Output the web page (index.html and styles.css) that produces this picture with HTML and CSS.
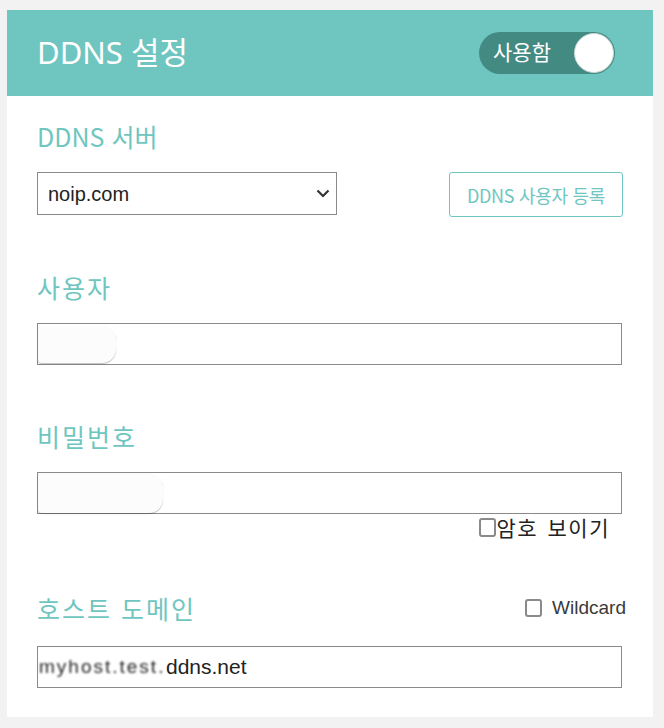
FILE: index.html
```html
<!DOCTYPE html>
<html lang="ko">
<head>
<meta charset="utf-8">
<title>DDNS 설정</title>
<link rel="stylesheet" href="styles.css">
</head>
<body>
<div class="card">
  <div class="header">
    <h1 class="title">DDNS 설정</h1>
    <div class="toggle">
      <span class="toggle-text">사용함</span>
      <span class="knob"></span>
    </div>
  </div>
  <div class="body">
    <div class="group first">
      <div class="label">DDNS 서버</div>
      <div class="row">
        <div class="select-wrap">
          <select class="select"><option>noip.com</option></select>
          <svg class="chevron" width="14" height="9" viewBox="0 0 14 9"><path d="M1.5 1.5 L7 7 L12.5 1.5" fill="none" stroke="#333" stroke-width="2.2"/></svg>
        </div>
        <button class="btn">DDNS 사용자 등록</button>
      </div>
    </div>
    <div class="group g2">
      <div class="label ko">사용자</div>
      <div class="field">
        <input class="input" type="text" value="">
        <span class="smudge s1"></span>
      </div>
    </div>
    <div class="group g3">
      <div class="label ko">비밀번호</div>
      <div class="field">
        <input class="input" type="password" value="">
        <span class="smudge s2"></span>
      </div>
      <label class="show-pw"><input type="checkbox" class="cb">암호 보이기</label>
    </div>
    <div class="group last">
      <div class="label-row">
        <div class="label ko">호스트 도메인</div>
        <label class="wildcard"><input type="checkbox" class="cb">Wildcard</label>
      </div>
      <div class="input host"><span class="blur">myhost.test.</span>ddns.net</div>
    </div>
  </div>
</div>
</body>
</html>
```
FILE: styles.css
```css
* { box-sizing: border-box; }
html, body { margin: 0; padding: 0; }
body {
  background: #f2f2f2;
  font-family: "Liberation Sans", "Noto Sans CJK KR", sans-serif;
  padding: 10px 11px 11px 7px;
}
.card {
  background: #fff;
  width: 646px;
}
.header {
  background: #6fc5bf;
  height: 86px;
  display: flex;
  align-items: center;
  justify-content: space-between;
  padding: 0 38px 0 30px;
}
.title {
  margin: 0;
  color: #fff;
  font-family: "Noto Sans", "Noto Sans CJK KR", sans-serif;
  font-weight: normal;
  font-size: 31px;
  line-height: 1;
  margin-top: -2px;
}
.toggle {
  width: 136px;
  height: 42px;
  border-radius: 21px;
  background: #438a83;
  display: flex;
  align-items: center;
  justify-content: space-between;
  padding: 0 1px 0 14px;
  margin-top: -1px;
}
.toggle-text {
  color: #fff;
  font-family: "Noto Sans CJK KR", sans-serif;
  font-size: 21px;
  line-height: 1;
  margin-top: -2px;
}
.knob {
  width: 40px;
  height: 40px;
  border-radius: 50%;
  background: #fff;
  border: 1px solid #c9d6d4;
}
.body {
  padding: 28px 31px 29px 30px;
}
.group.first { margin-top: 0; }
.g2 { margin-top: 58px; }
.g3 { margin-top: 59px; }
.last { margin-top: 57px; }
.label {
  color: #6fc6c0;
  font-family: "Noto Sans CJK KR", sans-serif;
  font-size: 25px;
  line-height: 25px;
  height: 30px;
  margin-bottom: 18px;
}
.label.ko { letter-spacing: 2px; }
.row {
  display: flex;
  justify-content: space-between;
  align-items: flex-start;
}
.select-wrap { position: relative; width: 300px; height: 43px; }
.select {
  -webkit-appearance: none;
  appearance: none;
  width: 300px;
  height: 43px;
  border: 1px solid #8a8a8a;
  border-radius: 0;
  background: #fff;
  font-family: "Liberation Sans", sans-serif;
  font-size: 20px;
  color: #222;
  padding: 0 10px;
  margin: 0;
}
.chevron {
  position: absolute;
  right: 7px;
  top: 17px;
  pointer-events: none;
}
.btn {
  width: 174px;
  height: 45px;
  border: 1px solid #6fc6c0;
  border-radius: 3px;
  background: #fff;
  color: #6fc6c0;
  font-family: "Noto Sans CJK KR", sans-serif;
  font-size: 18px;
  letter-spacing: -0.3px;
  padding: 0;
  margin-right: -1px;
}
.field { position: relative; }
.input {
  display: block;
  width: 585px;
  height: 42px;
  border: 1px solid #8a8a8a;
  border-radius: 0;
  background: #fff;
  margin: 0;
  padding: 0 10px;
  font-family: "Liberation Sans", sans-serif;
  font-size: 21px;
  color: #222;
}
.smudge {
  position: absolute;
  left: 1px;
  top: 3px;
  height: 37px;
  background: #fcfcfc;
  border-radius: 4px 14px 14px 4px;
  box-shadow: 0 1px 1px rgba(0,0,0,0.25);
  filter: blur(0.6px);
}
.s1 { width: 78px; }
.s2 { width: 125px; top: 1px; height: 40px; }
.show-pw {
  display: flex;
  justify-content: flex-end;
  align-items: center;
  height: 24px;
  margin-top: 1px;
  padding-right: 12px;
  font-family: "Noto Sans CJK KR", sans-serif;
  font-size: 21px;
  color: #222;
  letter-spacing: 1.5px;
  word-spacing: 2px;
}
.cb {
  -webkit-appearance: none;
  appearance: none;
  width: 17px;
  height: 19px;
  border: 2px solid #8a8a8a;
  border-radius: 3px;
  margin: 0 1px 0 0;
  background: #fff;
}
.label-row {
  display: flex;
  justify-content: space-between;
  align-items: center;
  margin-right: -4px;
  margin-bottom: 20px;
}
.label-row .label { margin-bottom: 0; }
.wildcard {
  display: flex;
  align-items: center;
  font-family: "Liberation Sans", sans-serif;
  font-size: 19px;
  color: #3a3a3a;
  margin-top: -6px;
  letter-spacing: 0;
}
.wildcard .cb { margin-right: 10px; height: 18px; }
.host {
  display: flex;
  align-items: center;
  padding: 0 0 0 1px;
  font-size: 21px;
  color: #222;
}
.blur {
  filter: blur(1.1px);
  color: #222;
  font-size: 19px;
  letter-spacing: 2px;
  width: 127px;
  overflow: hidden;
  white-space: nowrap;
}
```
